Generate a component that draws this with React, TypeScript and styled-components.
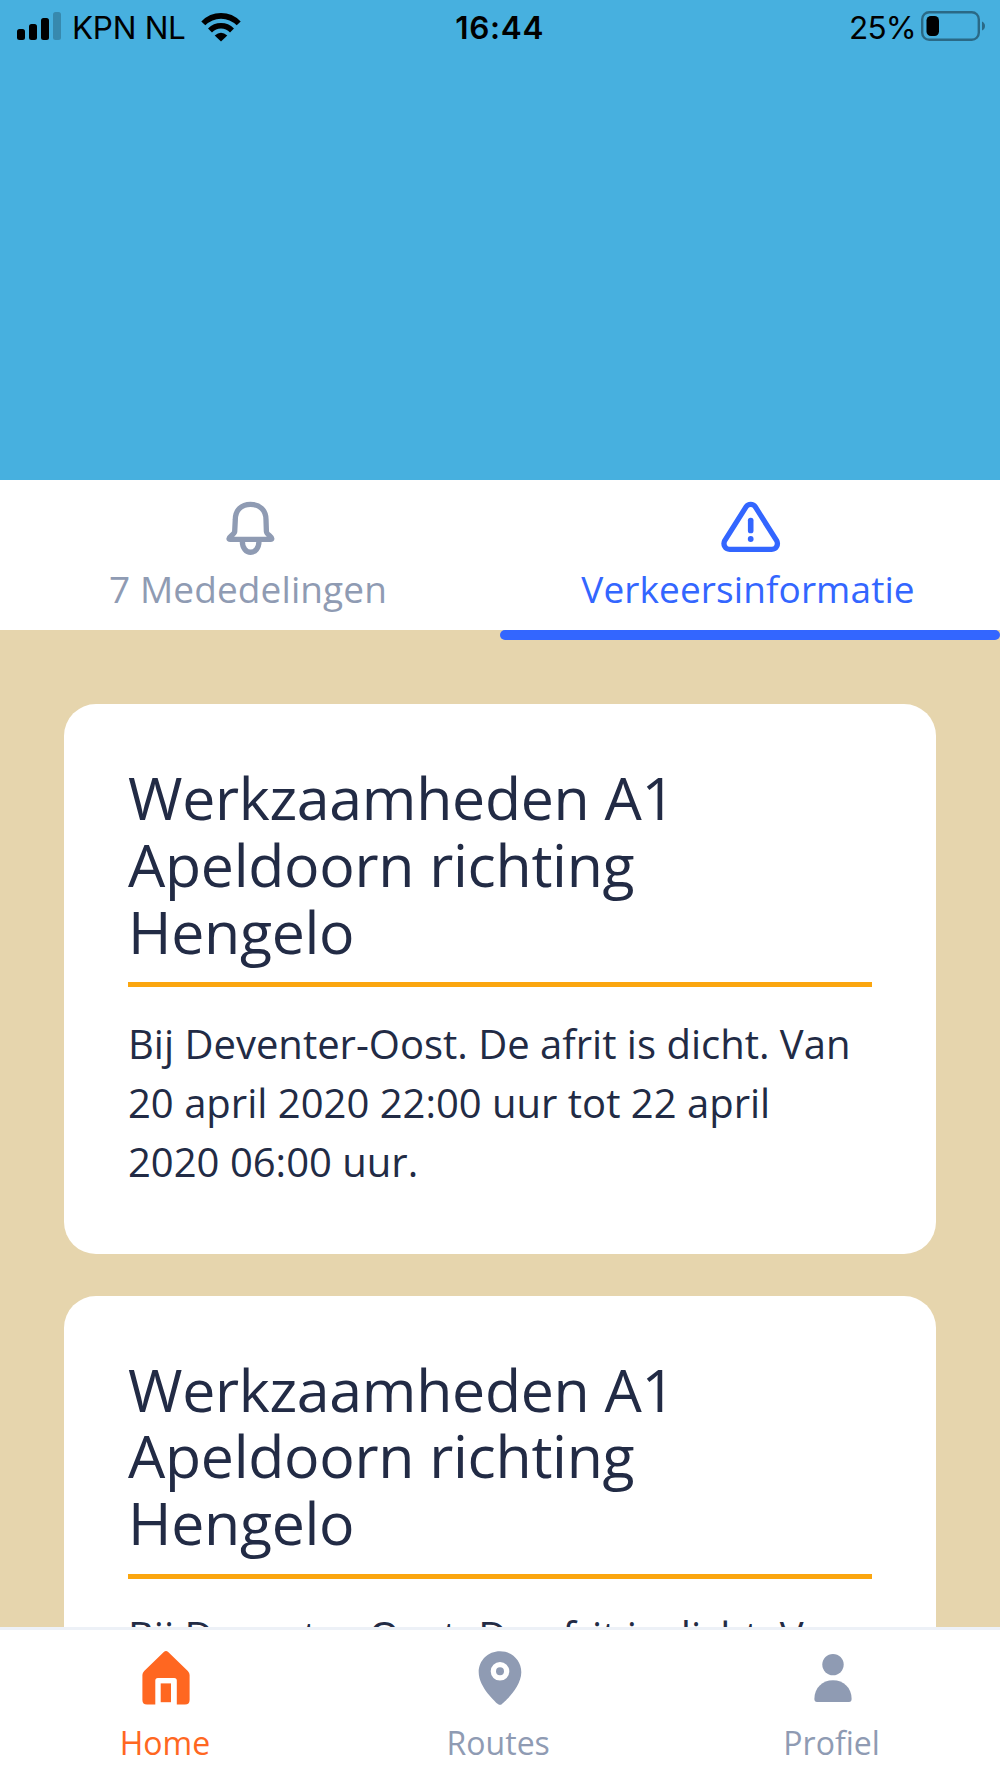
import React from "react";
import styled, { createGlobalStyle } from "styled-components";

const GlobalStyle = createGlobalStyle`
  * { box-sizing: border-box; }
  body { margin: 0; background: #ffffff; }
  h2, p { margin: 0; font-weight: 400; }
`;

const Screen = styled.div`
  width: 1000px;
  height: 1778px;
  display: flex;
  flex-direction: column;
  overflow: hidden;
  background: #e6d5ad;
  color: #222b45;
  font-family: "Open Sans", sans-serif;
`;

const Hero = styled.header`
  flex: 0 0 480px;
  background: #47b0df;
`;

const StatusBar = styled.div`
  height: 56px;
  padding: 0 14px 0 17px;
  display: grid;
  grid-template-columns: 1fr auto 1fr;
  align-items: center;
  color: #000000;
  font-family: Inter, sans-serif;
  font-size: 31.5px;
  line-height: 56px;
`;

const StatusGroup = styled.div<{ $end?: boolean }>`
  display: flex;
  align-items: center;
  justify-content: ${(p) => (p.$end ? "flex-end" : "flex-start")};
`;

const Carrier = styled.span`
  margin: 0 15px 0 10px;
  letter-spacing: -0.3px;
`;

const Clock = styled.span`
  padding-right: 3.5px;
  font-weight: 600;
  letter-spacing: 0.7px;
`;

const Percent = styled.span`
  margin-right: 5px;
  letter-spacing: -0.8px;
`;

const Icon = styled.svg<{ $lift?: number }>`
  display: block;
  flex: none;
  margin-bottom: ${(p) => p.$lift ?? 0}px;
`;

const Tabs = styled.nav`
  flex: 0 0 160px;
  display: grid;
  grid-template-columns: 1fr 1fr;
`;

const Tab = styled.div<{ $active?: boolean }>`
  display: grid;
  grid-template-rows: 150px 10px;
  color: ${(p) => (p.$active ? "#3366ff" : "#8f9bb3")};
`;

const TabFace = styled.div`
  display: flex;
  flex-direction: column;
  align-items: center;
  padding-top: 18px;
  background: #ffffff;
`;

const TabLabel = styled.span`
  margin: 2px 4px 0 0;
  font-size: 37px;
  line-height: 50px;
  letter-spacing: 0.1px;
`;

const Indicator = styled.div`
  background: #3366ff;
  border-radius: 5px;
`;

const Feed = styled.main`
  flex: 1;
  min-height: 0;
  overflow: hidden;
  padding: 64.3px 64px 0;
  display: flex;
  flex-direction: column;
  gap: 42px;
`;

const Card = styled.article`
  flex: none;
  padding: 59.7px 64px 62.6px;
  border-radius: 32px;
  background: #ffffff;
`;

const CardTitle = styled.h2`
  font-size: 59px;
  line-height: 66.8px;
  letter-spacing: -0.3px;
  white-space: pre-line;
`;

const Rule = styled.div`
  height: 5px;
  margin: 17.6px 0 28.4px;
  background: #fba60f;
`;

const CardText = styled.p`
  font-size: 40px;
  line-height: 58.65px;
  white-space: pre-line;
`;

const BottomNav = styled.nav`
  flex: 0 0 151px;
  display: grid;
  grid-template-columns: repeat(3, 1fr);
  border-top: 3px solid #edf1f7;
  background: #ffffff;
`;

const NavItem = styled.div<{ $active?: boolean }>`
  display: flex;
  flex-direction: column;
  align-items: center;
  padding-top: 16px;
  color: ${(p) => (p.$active ? "#ff6721" : "#8f9bb3")};
`;

const NavLabel = styled.span`
  margin: 11px 3.5px 0 0;
  font-size: 32px;
  line-height: 44px;
`;

const SignalIcon = () => (
  <Icon width="45" height="28" viewBox="0 0 45 28" $lift={4}>
    <rect x="0" y="17" width="8" height="11" rx="2.5" />
    <rect x="12" y="12" width="8" height="16" rx="2.5" />
    <rect x="24" y="6" width="8" height="22" rx="2.5" />
    <rect x="36" y="0" width="8" height="28" rx="2.5" opacity="0.22" />
  </Icon>
);

const WifiIcon = () => (
  <Icon width="40" height="30" viewBox="0 0 40 30" fill="none" stroke="#000" strokeWidth="5.6" $lift={2}>
    <path d="M2.3 11.4C12.2 1.3 27.8 1.3 37.7 11.4" />
    <path d="M9 18.4C15.2 12.2 24.8 12.2 31 18.4" />
    <path d="M13.7 23.4Q20 18 26.3 23.4L20 29.5Z" fill="#000" stroke="none" />
  </Icon>
);

const BatteryIcon = () => (
  <Icon width="65" height="32" viewBox="0 0 65 32" $lift={4}>
    <rect x="1.2" y="2.2" width="56.600" height="27.600" rx="7" fill="none" stroke="#000" strokeOpacity="0.4" strokeWidth="2.4" />
    <rect x="5.500" y="6" width="12.500" height="20" rx="4.500" />
    <path d="M61 11.500Q64 13 64 16T61 20.500Z" opacity="0.4" />
  </Icon>
);

const BellIcon = () => (
  <Icon width="64" height="64" viewBox="0 0 64 64" fill="none" stroke="currentColor" strokeWidth="5.3" strokeLinejoin="round">
    <path d="M17.300 21.500C17.300 12 23.500 6.300 32.500 6.300S48 12 48 21.500L48.400 33.500C48.500 36.500 53.800 38.300 53.800 40.500Q53.800 41.300 52.500 41.300H12.300Q11 41.300 11 40.500C11 38.300 16.500 36.500 16.700 33.500Z" />
    <path d="M24.300 43C24.300 58 41 58 41 43" />
  </Icon>
);

const WarningIcon = () => (
  <Icon width="64" height="64" viewBox="0 0 64 64" fill="none" stroke="currentColor" strokeWidth="5.300" strokeLinejoin="round">
    <path d="M28.200 8.700L6.900 42.300C4.600 46.500 7 51.300 11.700 51.300H53.700C58.400 51.300 60.800 46.500 58.500 42.300L37.200 8.700C35.200 5.500 30.200 5.500 28.200 8.700Z" />
    <rect x="29.900" y="19.700" width="5.600" height="15.600" rx="2.600" fill="currentColor" stroke="none" />
    <circle cx="32.700" cy="41" r="2.900" fill="currentColor" stroke="none" />
  </Icon>
);

const HomeIcon = () => (
  <Icon width="64" height="64" viewBox="1 0 64 64" fill="currentColor">
    <path d="M29.800 6.100Q32 4 34.200 6.100L53.800 25Q55.600 26.800 55.600 29V54Q55.600 58.600 51 58.600H42.800V34.500Q42.800 32 40.300 32H23.800Q21.300 32 21.300 34.500V58.600H13Q8.400 58.600 8.400 54V29Q8.400 26.800 10.200 25Z" />
    <rect x="26.700" y="37.400" width="10.300" height="18.800" />
  </Icon>
);

const PinIcon = () => (
  <Icon width="64" height="64" viewBox="0 0 64 64">
    <path fill="currentColor" fillRule="evenodd" d="M32 5.300C20 5.300 10.700 14.500 10.700 26.200C10.700 41.300 28.500 57 30.200 58.200Q32 59.400 33.800 58.200C35.500 57 53.300 41.300 53.300 26.200C53.300 14.500 44 5.300 32 5.300ZM32 16A9.300 9.300 0 1 1 32 34.600A9.300 9.300 0 1 1 32 16Z" />
    <circle cx="32" cy="25.300" r="4" fill="currentColor" />
  </Icon>
);

const PersonIcon = () => (
  <Icon width="64" height="64" viewBox="0 0 64 64" fill="currentColor">
    <circle cx="32" cy="18.600" r="10.700" />
    <path d="M13.400 53V52.500C13.400 42 21.500 34.300 32 34.300S50.600 42 50.600 52.500V53Q50.600 56 48 56H16Q13.400 56 13.400 53Z" />
  </Icon>
);

const title = "Werkzaamheden A1\nApeldoorn richting\nHengelo";

const notices = [
  {
    id: 1,
    title,
    text: "Bij Deventer-Oost. De afrit is dicht. Van\n20 april 2020 22:00 uur tot 22 april\n2020 06:00 uur.",
  },
  { id: 2, title, text: "Bij Deventer-Oost. De afrit is dicht. Van" },
];

export default function App() {
  return (
    <>
      <GlobalStyle />
      <Screen>
        <Hero>
          <StatusBar>
            <StatusGroup>
              <SignalIcon />
              <Carrier>KPN NL</Carrier>
              <WifiIcon />
            </StatusGroup>
            <Clock>16:44</Clock>
            <StatusGroup $end>
              <Percent>25%</Percent>
              <BatteryIcon />
            </StatusGroup>
          </StatusBar>
        </Hero>
        <Tabs>
          <Tab>
            <TabFace>
              <BellIcon />
              <TabLabel>7 Mededelingen</TabLabel>
            </TabFace>
          </Tab>
          <Tab $active>
            <TabFace>
              <WarningIcon />
              <TabLabel>Verkeersinformatie</TabLabel>
            </TabFace>
            <Indicator />
          </Tab>
        </Tabs>
        <Feed>
          {notices.map((n) => (
            <Card key={n.id}>
              <CardTitle>{n.title}</CardTitle>
              <Rule />
              <CardText>{n.text}</CardText>
            </Card>
          ))}
        </Feed>
        <BottomNav>
          <NavItem $active>
            <HomeIcon />
            <NavLabel>Home</NavLabel>
          </NavItem>
          <NavItem>
            <PinIcon />
            <NavLabel>Routes</NavLabel>
          </NavItem>
          <NavItem>
            <PersonIcon />
            <NavLabel>Profiel</NavLabel>
          </NavItem>
        </BottomNav>
      </Screen>
    </>
  );
}
